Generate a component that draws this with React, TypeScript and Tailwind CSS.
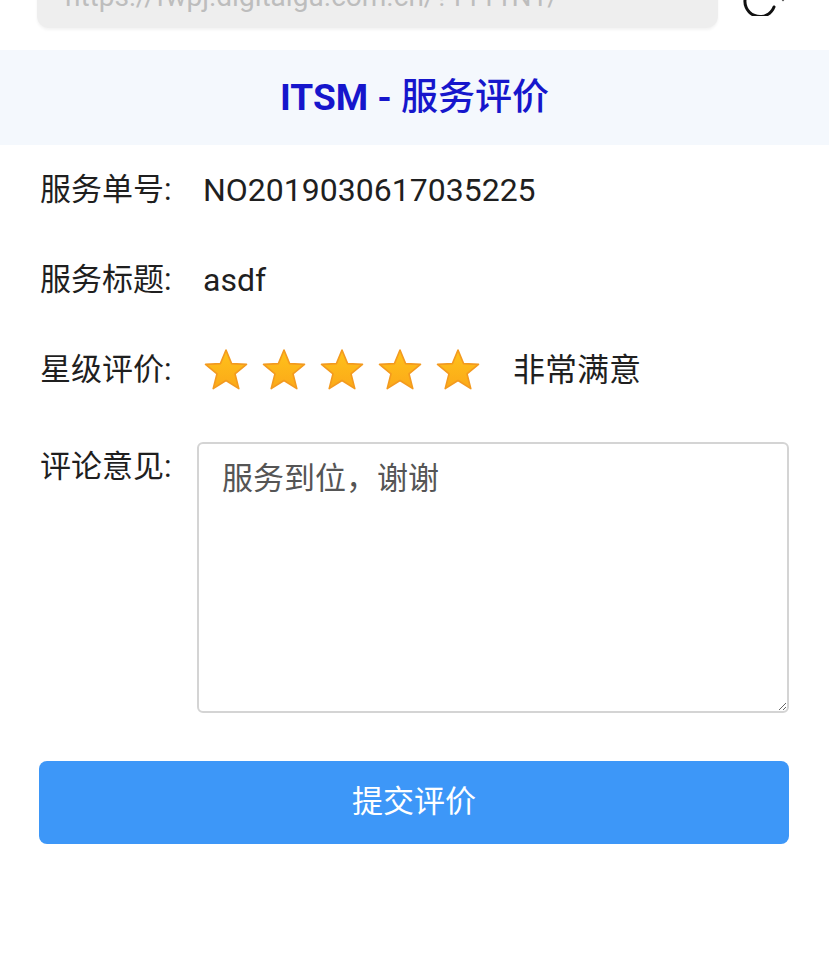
import React from "react";

const CJK = { fontFamily: 'Roboto, "Noto Sans CJK SC", sans-serif' };

function Star() {
  return (
    <svg width="46" height="44" viewBox="0 0 46 44" className="shrink-0">
      <defs>
        <linearGradient id="starFill" x1="0" y1="0" x2="0" y2="1">
          <stop offset="0%" stopColor="#ffc21a" />
          <stop offset="100%" stopColor="#fba919" />
        </linearGradient>
      </defs>
      <path
        d="M23 2 L28.6 15.6 L43.5 16.4 L32 25.8 L35.8 40.6 L23 32.5 L10.2 40.6 L14 25.8 L2.5 16.4 L17.4 15.6 Z"
        fill="url(#starFill)"
        stroke="#f39a1f"
        strokeWidth="1.6"
        strokeLinejoin="round"
      />
    </svg>
  );
}

function Row({ label, children }: { label: string; children: React.ReactNode }) {
  return (
    <div className="flex h-[90px] items-center px-[40px]">
      <span className="w-[163px] shrink-0 text-[31px] text-[#1f1f1f]">{label}</span>
      {children}
    </div>
  );
}

export default function App() {
  return (
    <div className="min-h-[969px] w-[829px] overflow-hidden bg-white" style={CJK}>
      {/* browser chrome, mostly scrolled off */}
      <div className="relative h-[50px] overflow-hidden bg-white">
        <div className="ml-[37px] mt-[-34px] flex h-[62px] w-[681px] items-center rounded-xl bg-[#eeeeee] px-[28px] shadow-[0_2px_3px_rgba(0,0,0,0.05)]">
          <span className="text-[28px] text-[#bdbdbd]">https://fwpj.digitalgu.com.cn/?1111N1/</span>
        </div>
        <svg className="absolute left-[738px] top-[-28px]" width="50" height="44" viewBox="0 0 50 44">
          <path d="M8 24 A15 15 0 0 0 36 35" fill="none" stroke="#111" strokeWidth="3" strokeLinecap="round" />
          <circle cx="45" cy="28" r="1.2" fill="#666" />
        </svg>
      </div>

      <div className="flex h-[95px] items-center justify-center bg-[#f4f8fd]">
        <h1 className="text-[37px] text-[#1616cc]">
          <span className="font-bold">ITSM - </span>
          <span className="font-medium">服务评价</span>
        </h1>
      </div>

      <Row label="服务单号:">
        <span className="text-[32px] text-[#1f1f1f]">NO2019030617035225</span>
      </Row>
      <Row label="服务标题:">
        <span className="text-[32px] text-[#1f1f1f]">asdf</span>
      </Row>
      <Row label="星级评价:">
        <div className="flex items-center gap-[12px]">
          <Star />
          <Star />
          <Star />
          <Star />
          <Star />
        </div>
        <span className="ml-[32px] text-[32px] text-[#1f1f1f]">非常满意</span>
      </Row>

      <div className="mt-[27px] flex items-start px-[40px]">
        <span className="mt-[2px] w-[157px] shrink-0 text-[31px] text-[#1f1f1f]">评论意见:</span>
        <textarea
          defaultValue="服务到位，谢谢"
          className="h-[271px] flex-1 resize-y rounded-md border-2 border-[#d4d4d4] px-[23px] py-[12px] text-[31px] text-[#555] outline-none"
          style={CJK}
        />
      </div>

      <div className="mt-[48px] pl-[39px] pr-[40px]">
        <button className="flex h-[83px] w-full items-center justify-center rounded-lg bg-[#3d97f8] text-[31px] text-white">
          提交评价
        </button>
      </div>
    </div>
  );
}
